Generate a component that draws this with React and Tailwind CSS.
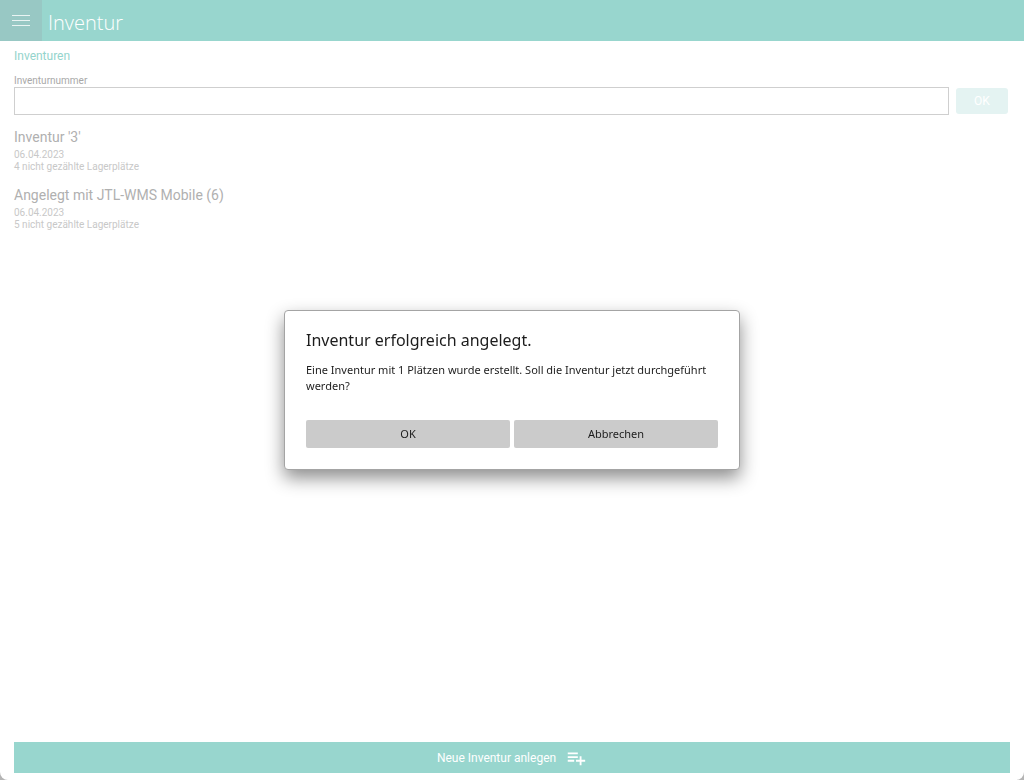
import { useState } from "react";
import { MdPlaylistAdd } from "react-icons/md";

const inventories = [
  { id: 3, title: "Inventur '3'", date: "06.04.2023", open: 4 },
  { id: 6, title: "Angelegt mit JTL-WMS Mobile (6)", date: "06.04.2023", open: 5 },
];

const Header = () => (
  <header className="flex h-[41px] items-center bg-[#98d6ce]">
    <button aria-label="Menü" className="flex h-full w-[42px] items-center justify-center bg-[#98c8c4]">
      <svg width="18" height="11" viewBox="0 0 18 11" stroke="#e9f4f3" strokeWidth="1">
        <path d="M0 .5h18M0 5.5h18M0 10.5h18" />
      </svg>
    </button>
    <h1 className="ml-[6px] pt-1 font-['Open_Sans','Noto_Sans',sans-serif] text-[20px] leading-[28px] font-light text-white">
      Inventur
    </h1>
  </header>
);

const InventoryItem = ({ item }) => (
  <li>
    <a href="#" className="block">
      <p className="text-[14px] leading-[18px] text-[#b0b0b0]">{item.title}</p>
      <p className="mt-[3px] text-[10px] leading-[12px] text-[#c8c8c8]">{item.date}</p>
      <p className="text-[10px] leading-[12px] text-[#c8c8c8]">{item.open} nicht gezählte Lagerplätze</p>
    </a>
  </li>
);

const ConfirmDialog = ({ onClose }) => (
  <div className="fixed inset-0 flex items-center justify-center font-['Noto_Sans','Open_Sans',sans-serif] text-[#1c1c1c]">
    <div
      role="dialog"
      aria-labelledby="dialog-title"
      className="w-[456px] rounded-[4px] border border-[#a4a4a4] bg-white px-[21px] pt-[17px] pb-[21px] shadow-[0_8px_18px_rgba(0,0,0,0.45)]">
      <h2 id="dialog-title" className="text-[16px] leading-[24px]">Inventur erfolgreich angelegt.</h2>
      <p className="mt-[10px] text-[11px] leading-[16px]">
        Eine Inventur mit 1 Plätzen wurde erstellt. Soll die Inventur jetzt durchgeführt werden?
      </p>
      <div className="mt-[26px] flex gap-1 text-[11px]">
        <button onClick={onClose} className="h-7 flex-1 rounded-[2px] bg-[#cbcbcb]">OK</button>
        <button onClick={onClose} className="h-7 flex-1 rounded-[2px] bg-[#cbcbcb]">Abbrechen</button>
      </div>
    </div>
  </div>
);

const App = () => {
  const [number, setNumber] = useState("");
  const [showDialog, setShowDialog] = useState(true);

  return (
    <div className="bg-[#b4b4b4] font-[Roboto,sans-serif]">
      <div className="flex min-h-screen flex-col rounded-b-[8px] bg-white">
        <Header />

        <main className="flex flex-1 flex-col px-[14px] pb-[7px]">
          <h2 className="mt-[7px] text-[12px] leading-[16px] text-[#94d4cc]">Inventuren</h2>

          <label htmlFor="number" className="mt-[10px] text-[10px] leading-[13px] text-[#a8a8a8]">
            Inventurnummer
          </label>
          <div className="flex items-center gap-[7px] pr-[2px]">
            <input
              id="number"
              value={number}
              onChange={(e) => setNumber(e.target.value)}
              className="h-7 min-w-0 flex-1 border border-[#cfcfcf] px-2 text-[12px] outline-none"
            />
            <button className="h-[26px] w-[52px] rounded-[3px] bg-[#e4f3f2] text-[12px] text-white">OK</button>
          </div>

          {/* Open inventories */}
          <ul className="mt-[13px] flex flex-col gap-[13px]">
            {inventories.map((item) => (
              <InventoryItem key={item.id} item={item} />
            ))}
          </ul>

          <button className="mt-auto flex h-[31px] w-full items-center justify-center gap-[9px] bg-[#98d6ce] text-[12px] text-white">
            Neue Inventur anlegen
            <MdPlaylistAdd size={22} />
          </button>
        </main>
      </div>

      {showDialog && <ConfirmDialog onClose={() => setShowDialog(false)} />}
    </div>
  );
};

export default App;
